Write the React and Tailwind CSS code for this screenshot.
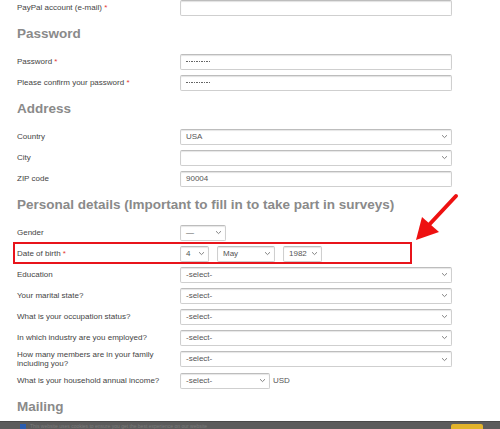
import React from "react";

const Chevron = () => (
  <svg width="7" height="5" viewBox="0 0 7 5" className="shrink-0">
    <path d="M1 1.2 L3.5 3.6 L6 1.2" fill="none" stroke="#777" strokeWidth="0.9" />
  </svg>
);

const Req = () => <span className="text-[#e53935]"> *</span>;

const Input = ({ children, w = "w-[272px]" }) => (
  <div className={`${w} h-[16px] border border-[#cfcfcf] border-t-[#bdbdbd] rounded-[2px] bg-white shadow-[inset_0_1px_1px_rgba(0,0,0,0.12)] flex items-center px-[5px] text-[8px] text-[#555]`}>
    {children}
  </div>
);

const Select = ({ value, w = "w-[272px]" }) => (
  <div className={`${w} h-[16px] border border-[#cfcfcf] border-t-[#bdbdbd] rounded-[2px] bg-white shadow-[inset_0_1px_1px_rgba(0,0,0,0.1)] flex items-center justify-between pl-[5px] pr-[3px] text-[8px] text-[#555]`}>
    <span>{value}</span>
    <Chevron />
  </div>
);

const Row = ({ label, req, children, h = "h-[21px]" }) => (
  <div className={`flex items-center ${h}`}>
    <div className="w-[163px] text-[8px] leading-[9px] text-[#444]">
      {label}
      {req && <Req />}
    </div>
    {children}
  </div>
);

const Heading = ({ children }) => (
  <div className="h-[33px] flex items-center text-[13.5px] font-bold text-[#8a8a8a]">{children}</div>
);

const Dots = () => (
  <span className="flex gap-[1px]">
    {Array.from({ length: 10 }).map((_, i) => (
      <span key={i} className="w-[1.5px] h-[1px] bg-[#666]" />
    ))}
  </span>
);

export default function App() {
  return (
    <div
      className="relative w-[500px] h-[429px] overflow-hidden bg-white"
      style={{ fontFamily: '"Liberation Sans", Arial, sans-serif' }}
    >
      <div className="pl-[17px] -mt-[3px]">
        <Row label="PayPal account (e-mail)" req>
          <Input />
        </Row>
        <Heading>Password</Heading>
        <Row label="Password" req>
          <Input>
            <Dots />
          </Input>
        </Row>
        <Row label="Please confirm your password" req>
          <Input>
            <Dots />
          </Input>
        </Row>
        <Heading>Address</Heading>
        <Row label="Country">
          <Select value="USA" />
        </Row>
        <Row label="City">
          <Select value="" />
        </Row>
        <Row label="ZIP code">
          <Input>90004</Input>
        </Row>
        <Heading>Personal details (Important to fill in to take part in surveys)</Heading>
        <Row label="Gender">
          <Select value="—" w="w-[46px]" />
        </Row>
        <div className="relative">
          <Row label="Date of birth" req>
            <div className="flex gap-[8px]">
              <Select value="4" w="w-[29px]" />
              <Select value="May" w="w-[58px]" />
              <Select value="1982" w="w-[39px]" />
            </div>
          </Row>
          <div className="absolute left-[-4px] top-[-1px] w-[399px] h-[22px] border-2 border-[#e8141b]" />
        </div>
        <Row label="Education">
          <Select value="-select-" />
        </Row>
        <Row label="Your marital state?">
          <Select value="-select-" />
        </Row>
        <Row label="What is your occupation status?">
          <Select value="-select-" />
        </Row>
        <Row label="In which industry are you employed?">
          <Select value="-select-" />
        </Row>
        <Row label={<>How many members are in your family<br />including you?</>} h="h-[22px]">
          <Select value="-select-" />
        </Row>
        <Row label="What is your household annual income?">
          <div className="flex items-center gap-[3px]">
            <Select value="-select-" w="w-[90px]" />
            <span className="text-[8px] text-[#555]">USD</span>
          </div>
        </Row>
        <Heading>Mailing</Heading>
      </div>

      <svg className="absolute left-[410px] top-[190px]" width="52" height="56" viewBox="0 0 52 56">
        <path d="M46 6 L17 37" stroke="#ee1111" strokeWidth="4" strokeLinecap="round" fill="none" />
        <path d="M6 50 L12 27 L29 42 Z" fill="#ee1111" />
      </svg>

      <div className="absolute left-0 right-0 bottom-0 h-[8px] bg-[#5c5c5c] border-t border-[#4a4a4a]">
        <div className="absolute left-[20px] top-[2px] w-[6px] h-[6px] bg-[#2a5db0]" />
        <div className="absolute left-[30px] top-[1px] text-[5px] leading-[6px] text-[#7a7a7a]">
          This website uses cookies to ensure you get the best experience on our website
        </div>
        <div className="absolute left-[451px] top-[2px] w-[32px] h-[8px] rounded-[2px] bg-[#e2b32b]" />
      </div>
    </div>
  );
}
